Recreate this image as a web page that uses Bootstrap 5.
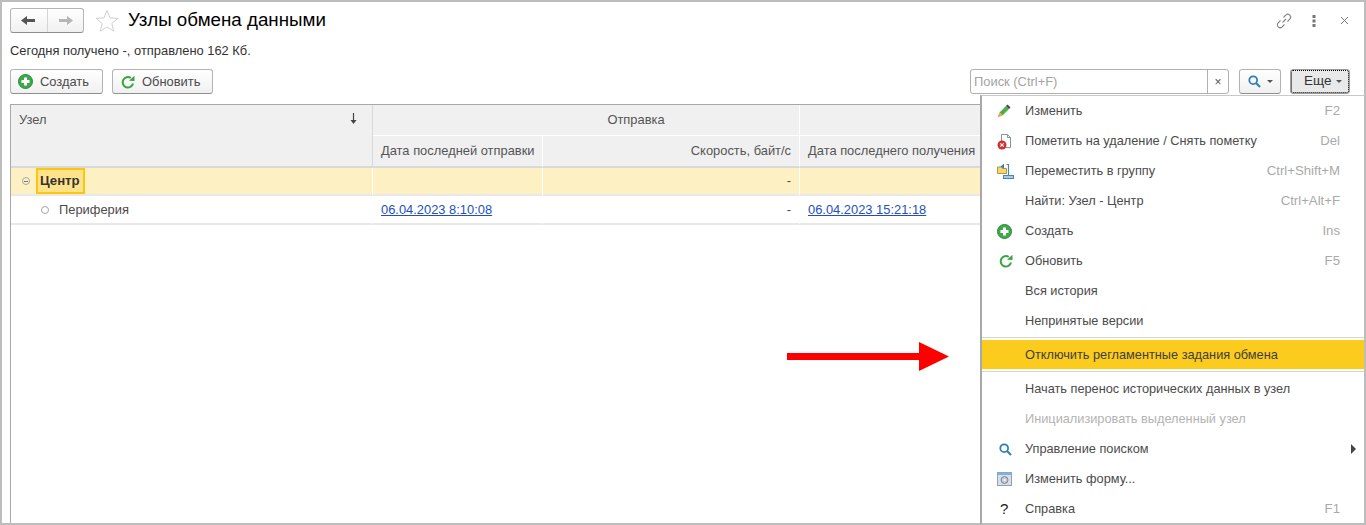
<!DOCTYPE html>
<html lang="ru">
<head>
    <meta charset="UTF-8">
    <meta name="viewport" content="width=device-width, initial-scale=1.0">
    <title>Узлы обмена данными</title>
    <link href="https://cdn.jsdelivr.net/npm/bootstrap@5.3.0/dist/css/bootstrap.min.css" rel="stylesheet">
    <style>
        html, body { height: 525px; overflow: hidden; }
        body {
            background: #fff;
            font-family: "Liberation Sans", Arial, sans-serif;
            font-size: 12.9px;
            color: #4b4b4b;
        }
        .frame {
            height: 525px;
            border: 2px solid #bdbdbd;
            overflow: hidden;
        }
        .head-row { height: 25px; margin: 6px 0 0 8px; }
        .nav-pair {
            width: 74px; height: 25px;
            border: 1px solid #b4b4b4; border-bottom-color: #8e8e8e; border-radius: 3px;
            background: linear-gradient(#fff, #f0f0f0);
        }
        .nav-pair > span { flex: 1; }
        .nav-pair > span + span { border-left: 1px solid #d5d5d5; }
        .page-title { font-size: 18.75px; line-height: 25px; color: #000; font-weight: 400; margin: 0 0 2px 9px; }
        .star { margin-left: 11px; }
        .win-tools { margin-right: 15px; }
        .tool-dots { margin: 0 24px 0 19px; }
        .info-line { margin: 9px 0 0 8px; line-height: 17px; color: #333; }
        .cmd-row { margin: 10px 0 0 8px; height: 25px; padding-right: 14px; }
        .cmd-btn {
            height: 25px; padding: 0 0 0 7px;
            display: flex; align-items: center; gap: 7px;
            border: 1px solid #b4b4b4; border-bottom-color: #8e8e8e; border-radius: 3px;
            background: linear-gradient(#fff, #f0f0f0);
            color: #4b4b4b; font-size: 12.9px;
        }
        .btn-create { width: 93px; }
        .btn-refresh { width: 101px; margin-left: 9px; padding-left: 8px; }
        .search-box {
            width: 259px; height: 25px;
            border: 1px solid #b0b0b0; border-radius: 3px; background: #fff;
        }
        .search-box input {
            flex: 1; min-width: 0; border: 0; outline: 0; padding: 0 3px; font-size: 12.9px;
            border-right: 1px solid #b0b0b0; background: transparent;
        }
        .search-box input::placeholder { color: #a3a3a3; opacity: 1; }
        .search-x { width: 20px; text-align: center; color: #555; font-size: 12px; }
        .search-btn { width: 42px; padding: 0 0 0 8px; margin-left: 10px; gap: 6px; }
        .more-btn {
            width: 60px; margin-left: 9px; padding: 0 0 0 13px; gap: 5px;
            background: #e9e9e9; border-color: #9b9b9b; color: #333; font-size: 13.5px;
            outline: 1px dotted #000; outline-offset: -2px;
        }
        .caret-dn { width: 0; height: 0; border: 3px solid transparent; border-top: 3px solid #555; border-bottom: 0; }

        .grid-wrap {
            flex: 1; margin: 10px 0 0 8px;
            border-top: 1px solid #a8a8a8; border-left: 1px solid #a8a8a8;
            overflow: hidden;
        }
        .node-grid {
            table-layout: fixed; width: 1200px; margin: 0;
            font-size: 12.9px; --bs-table-bg: transparent; color: #4b4b4b;
            border-collapse: separate; border-spacing: 0;
        }
        .node-grid th {
            font-weight: 400; background: #f0f0f0; padding: 0 8px; height: 31px;
            border-right: 1px solid #fff; border-bottom: 1px solid #fff; color: #555;
            vertical-align: middle; box-shadow: none; white-space: nowrap;
        }
        .node-grid thead tr:last-child th { border-bottom: 2px solid #d9d9d9; height: 32px; }
        .node-grid th.first-col { vertical-align: top; padding-top: 5px; border-bottom: 2px solid #d9d9d9; border-right: 1px solid #d9d9d9; }
        .node-grid th.group-head { padding-left: 108px; }
        .node-grid td {
            height: 29px; padding: 0 8px; vertical-align: middle;
            border-right: 1px solid transparent; border-bottom: 2px solid #e8e8e8;
        }
        .node-grid tr.row-current td { background: #fdf1c4; border-right-color: #fff; height: 28px; }
        .node-grid tr.row-plain td { padding-top: 1px; }
        .node-grid a { color: #1f4fc0; }
        .sort-mark { margin: 3px 7px 0 0; }
        .cur-cell {
            display: inline-block; border: 2px solid #fbc60d; background: #ffe38a;
            font-weight: 700; color: #333; padding: 0 3px 0 2px; line-height: 22px; font-size: 13.2px;
            margin-left: 6px; vertical-align: middle;
        }
        .tree-dot { width: 8px; height: 8px; border: 1px solid #a5a5a5; border-radius: 50%; display: inline-block; position: relative; background: #fff; }
        .tree-minus { background: transparent; margin-left: 3px; vertical-align: middle; }
        .tree-minus::after { content: ""; position: absolute; left: 1px; right: 1px; top: 3px; height: 1px; background: #777; }
        .tree-leaf { margin: 0 10px 1px 22px; vertical-align: middle; }

        .menu-pop {
            position: absolute; left: 980px; top: 95px; width: 386px; height: 430px;
            background: #fff; border-left: 2px solid #a8a8a8; border-top: 1px solid #c8c8c8;
            border-right: 2px solid #bdbdbd; border-bottom: 2px solid #bdbdbd;
            font-size: 12.75px; color: #4b4b4b;
        }
        .menu-line { height: 30px; display: flex; align-items: center; padding: 0 24px 0 15px; }
        .menu-line .ico { width: 28px; flex: none; display: flex; align-items: center; }
        .menu-line .key { margin-left: auto; color: #a9a9a9; font-size: 13.2px; }
        .menu-line.off { color: #b3b3b3; }
        .menu-line.hot { background: #fbcb1e; color: #3f3f3f; height: 29px; }
        .menu-rule { height: 1px; background: #dcd7c3; margin: 2px 0; }
        .menu-rule.first-rule { margin-top: 1px; }
        .ico-narrow { margin-left: 2px; }
        .help-mark { font-size: 15px; color: #222; padding-left: 3px; }
        .sub-tri { margin-left: auto; margin-right: -16px; width: 0; height: 0; border: 5px solid transparent; border-left: 5px solid #444; border-right: 0; }
        .after-rule { margin-top: 1px; }
        .red-arrow { position: absolute; left: 787px; top: 341px; }
    </style>
</head>
<body>
    <div class="frame d-flex flex-column position-relative">
        <!-- Шапка формы -->
        <div class="head-row d-flex align-items-center">
            <div class="nav-pair d-flex">
                <span class="d-flex align-items-center justify-content-center">
                    <svg width="15" height="11" viewBox="0 0 15 11"><path d="M0 5.500 6 1v3h8v3H6v3z" fill="#555"/></svg>
                </span>
                <span class="d-flex align-items-center justify-content-center">
                    <svg width="15" height="11" viewBox="0 0 15 11"><path d="M15 5.500 9 1v3H1v3h8v3z" fill="#b5b5b5"/></svg>
                </span>
            </div>
            <svg class="star" width="24" height="23" viewBox="0 0 24 23"><path d="M12 1.500l3 7.300 7.800.6-6 5.100 1.900 7.600L12 18l-6.700 4.100 1.900-7.600-6-5.100 7.800-.6z" fill="#fff" stroke="#cfcfcf"/></svg>
            <h1 class="page-title">Узлы обмена данными</h1>
            <div class="win-tools ms-auto d-flex align-items-center">
                <svg width="18" height="18" viewBox="0 0 18 18" fill="none" stroke="#858585" stroke-width="1.100"><path d="M7.500 10.500l3.500-3.500"/><path d="M8.500 5.500l2.300-2.300a2.800 2.800 0 0 1 4 4L12.500 9.500"/><path d="M9.500 12.500l-2.300 2.300a2.800 2.800 0 0 1-4-4L5.500 8.500"/></svg>
                <svg class="tool-dots" width="4" height="12" viewBox="0 0 4 12"><g fill="#777"><rect x="0.500" y="0" width="3" height="3"/><rect x="0.500" y="4.500" width="3" height="3"/><rect x="0.500" y="9" width="3" height="3"/></g></svg>
                <svg width="9" height="9" viewBox="0 0 9 9" stroke="#777" stroke-width="1"><path d="M1 1l7 7M8 1l-7 7"/></svg>
            </div>
        </div>

        <div class="info-line">Сегодня получено -, отправлено 162 Кб.</div>

        <!-- Командная панель -->
        <div class="cmd-row d-flex align-items-center">
            <button type="button" class="cmd-btn btn-create">
                <svg width="15" height="15" viewBox="0 0 15 15"><circle cx="7.500" cy="7.500" r="7" fill="#3fa84a" stroke="#2b8a37"/><path d="M6 3.500h3V6h2.500v3H9v2.500H6V9H3.500V6H6z" fill="#fff"/></svg>
                Создать
            </button>
            <button type="button" class="cmd-btn btn-refresh">
                <svg width="14" height="14" viewBox="0 0 14 14" fill="none"><path d="M12 8.500A5.200 5.200 0 1 1 9.800 3" stroke="#3aa544" stroke-width="2"/><path d="M8 5.800 13.500 6V.8z" fill="#3aa544"/></svg>
                Обновить
            </button>
            <div class="search-box d-flex align-items-center ms-auto">
                <input type="text" class="align-self-stretch" placeholder="Поиск (Ctrl+F)">
                <span class="search-x">×</span>
            </div>
            <button type="button" class="cmd-btn search-btn">
                <svg width="13" height="13" viewBox="0 0 13 13" fill="none"><circle cx="5.200" cy="5.200" r="3.900" stroke="#2f7fb8" stroke-width="1.800"/><path d="M8 8l4 4" stroke="#2f7fb8" stroke-width="2.200"/></svg>
                <span class="caret-dn"></span>
            </button>
            <button type="button" class="cmd-btn more-btn">Еще <span class="caret-dn"></span></button>
        </div>

        <!-- Таблица узлов -->
        <div class="grid-wrap">
            <table class="table node-grid">
                <colgroup>
                    <col style="width:362px"><col style="width:170px"><col style="width:257px"><col style="width:200px"><col>
                </colgroup>
                <thead>
                    <tr>
                        <th rowspan="2" class="first-col">
                            <div class="d-flex justify-content-between">
                                <span>Узел</span>
                                <svg class="sort-mark" width="7" height="11" viewBox="0 0 7 11"><path d="M3.500 0v9" stroke="#444" stroke-width="1.200"/><path d="M.5 7h6l-3 4z" fill="#444"/></svg>
                            </div>
                        </th>
                        <th colspan="2" class="text-center group-head">Отправка</th>
                        <th colspan="2"></th>
                    </tr>
                    <tr>
                        <th>Дата последней отправки</th>
                        <th class="text-end">Скорость, байт/с</th>
                        <th>Дата последнего получения</th>
                        <th></th>
                    </tr>
                </thead>
                <tbody>
                    <tr class="row-current">
                        <td><span class="tree-dot tree-minus"></span><span class="cur-cell">Центр</span></td>
                        <td></td>
                        <td class="text-end">-</td>
                        <td></td>
                        <td></td>
                    </tr>
                    <tr class="row-plain">
                        <td><span class="tree-dot tree-leaf"></span>Периферия</td>
                        <td><a href="#">06.04.2023 8:10:08</a></td>
                        <td class="text-end">-</td>
                        <td><a href="#">06.04.2023 15:21:18</a></td>
                        <td></td>
                    </tr>
                </tbody>
            </table>
        </div>
    </div>

    <!-- Указатель на пункт меню -->
    <svg class="red-arrow" width="163" height="31" viewBox="0 0 163 31"><path d="M0 12h132V1l30 14.500L132 30V19H0z" fill="#f00"/></svg>

    <!-- Меню "Еще" -->
    <div class="menu-pop">
        <div class="menu-line"><span class="ico"><svg width="14" height="14" viewBox="0 0 14 14"><path d="M2.500 8.500 9 2l3 3-6.500 6.500z" fill="#4fae47"/><path d="M9 2l1.500-1.500 3 3L12 5z" fill="#444"/><path d="M2.500 8.500.5 13.500l5-2z" fill="#eda04b"/></svg></span>Изменить<span class="key">F2</span></div>
        <div class="menu-line"><span class="ico"><svg width="15" height="17" viewBox="0 0 15 17"><path d="M4.500 1.500h6l3 3v10h-9z" fill="#fff" stroke="#8a94a0"/><path d="M10.500 1.500v3h3" fill="none" stroke="#8a94a0"/><circle cx="5" cy="12" r="4.500" fill="#d32f2f"/><path d="M3.300 10.300l3.400 3.400M6.700 10.300l-3.400 3.400" stroke="#fff" stroke-width="1.200"/></svg></span>Пометить на удаление / Снять пометку<span class="key">Del</span></div>
        <div class="menu-line"><span class="ico"><svg width="17" height="16" viewBox="0 0 17 16"><path d="M.5 4h4l1 1.500h4v5h-9z" fill="#f5d76e" stroke="#b8973c"/><path d="M3.500 3.500L7 .8v5z" fill="#2f7fb8"/><path d="M9.500 1.500h2v11" fill="none" stroke="#4a85b5" stroke-width="1.200"/><rect x="6.500" y="12.500" width="10" height="3" fill="#a9cbe6" stroke="#4a85b5"/></svg></span>Переместить в группу<span class="key">Ctrl+Shift+M</span></div>
        <div class="menu-line"><span class="ico"></span>Найти: Узел - Центр<span class="key">Ctrl+Alt+F</span></div>
        <div class="menu-line"><span class="ico"><svg width="15" height="15" viewBox="0 0 15 15"><circle cx="7.500" cy="7.500" r="7" fill="#3fa84a" stroke="#2b8a37"/><path d="M6 3.500h3V6h2.500v3H9v2.500H6V9H3.500V6H6z" fill="#fff"/></svg></span>Создать<span class="key">Ins</span></div>
        <div class="menu-line"><span class="ico"><svg class="ico-narrow" width="14" height="14" viewBox="0 0 14 14" fill="none"><path d="M12 8.500A5.200 5.200 0 1 1 9.800 3" stroke="#3aa544" stroke-width="2"/><path d="M8 5.800 13.500 6V.8z" fill="#3aa544"/></svg></span>Обновить<span class="key">F5</span></div>
        <div class="menu-line"><span class="ico"></span>Вся история</div>
        <div class="menu-line"><span class="ico"></span>Непринятые версии</div>
        <div class="menu-rule first-rule"></div>
        <div class="menu-line hot"><span class="ico"></span>Отключить регламентные задания обмена</div>
        <div class="menu-rule"></div>
        <div class="menu-line after-rule"><span class="ico"></span>Начать перенос исторических данных в узел</div>
        <div class="menu-line off"><span class="ico"></span>Инициализировать выделенный узел</div>
        <div class="menu-line"><span class="ico"><svg class="ico-narrow" width="13" height="13" viewBox="0 0 13 13" fill="none"><circle cx="5.200" cy="5.200" r="3.900" stroke="#2f7fb8" stroke-width="1.800"/><path d="M8 8l4 4" stroke="#2f7fb8" stroke-width="2.200"/></svg></span>Управление поиском<span class="sub-tri"></span></div>
        <div class="menu-line"><span class="ico"><svg width="15" height="14" viewBox="0 0 15 14"><rect x=".5" y=".5" width="14" height="13" fill="#d8dfe6" stroke="#8fa0b0"/><rect x=".5" y=".5" width="14" height="2.500" fill="#7fb2de"/><circle cx="7.500" cy="8" r="3.500" fill="#bfc6cc" stroke="#808a94"/><circle cx="7.500" cy="8" r="1.300" fill="#eef1f4"/></svg></span>Изменить форму...</div>
        <div class="menu-line"><span class="ico help-mark">?</span>Справка<span class="key">F1</span></div>
    </div>

    <script src="https://cdn.jsdelivr.net/npm/bootstrap@5.3.0/dist/js/bootstrap.bundle.min.js"></script>
</body>
</html>
